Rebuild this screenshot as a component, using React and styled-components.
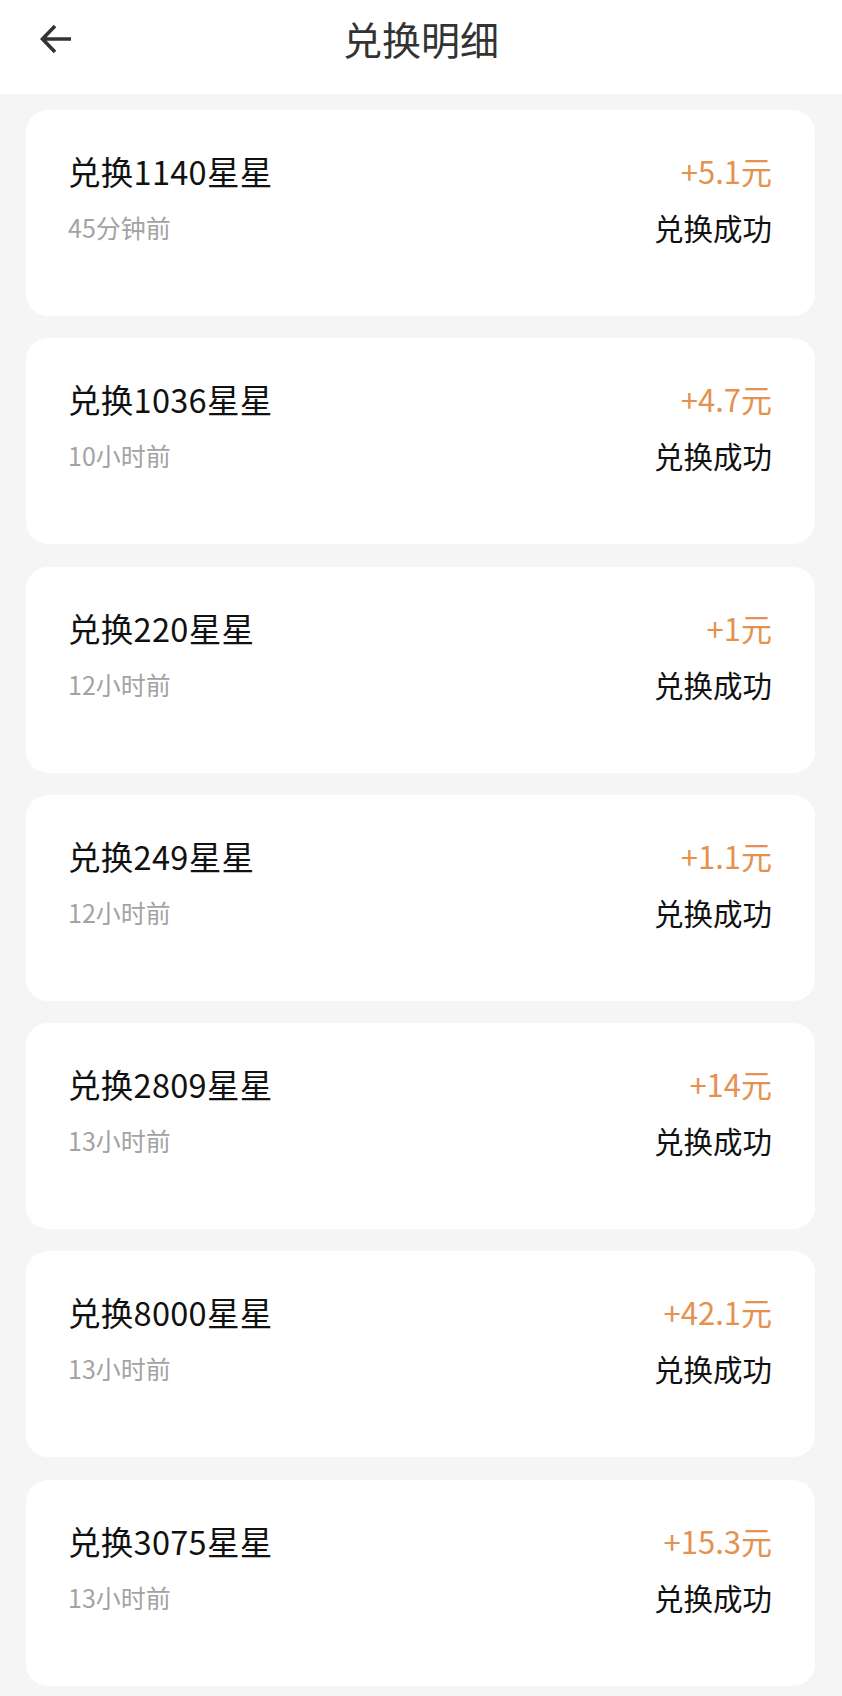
import React from "react";
import styled, { createGlobalStyle } from "styled-components";

const Global = createGlobalStyle`
  html, body { margin: 0; padding: 0; background: #f5f5f5; }
  body { font-family: "Noto Sans CJK SC", "Noto Sans", sans-serif; }
  * { box-sizing: border-box; }
`;

const Page = styled.div`
  width: 842px;
  min-height: 1696px;
  background: #f5f5f5;
`;

const Header = styled.header`
  position: relative;
  height: 94px;
  background: #ffffff;
  display: flex;
  align-items: center;
  justify-content: center;
`;

const Back = styled.button`
  position: absolute;
  left: 34px;
  top: 17px;
  width: 44px;
  height: 44px;
  padding: 0;
  border: 0;
  background: transparent;
  display: flex;
  align-items: center;
  justify-content: center;
`;

const Title = styled.h1`
  margin: 0 0 18px;
  font-size: 39px;
  font-weight: 400;
  color: #333333;
  line-height: 40px;
`;

const List = styled.div`
  display: flex;
  flex-direction: column;
  gap: 22.3px;
  padding: 16px 27px 12px 26px;
`;

const Card = styled.div`
  height: 206px;
  background: #ffffff;
  border-radius: 22px;
  padding: 43px 43px 0 42px;
  display: grid;
  grid-template-columns: 1fr auto;
  grid-template-rows: 36px 32px;
  row-gap: 22px;
  align-items: center;
`;

const Name = styled.div`
  font-size: 32.5px;
  line-height: 36px;
  color: #111111;
  letter-spacing: 0.3px;
`;

const Amount = styled.div`
  font-size: 31px;
  line-height: 36px;
  color: #e5914f;
  text-align: right;
`;

const Time = styled.div`
  font-size: 25px;
  line-height: 32px;
  color: #a3a3a3;
`;

const Status = styled.div`
  font-size: 29.5px;
  line-height: 32px;
  color: #111111;
  text-align: right;
`;

const records = [
  { stars: 1140, time: "45分钟前", amount: "+5.1元" },
  { stars: 1036, time: "10小时前", amount: "+4.7元" },
  { stars: 220, time: "12小时前", amount: "+1元" },
  { stars: 249, time: "12小时前", amount: "+1.1元" },
  { stars: 2809, time: "13小时前", amount: "+14元" },
  { stars: 8000, time: "13小时前", amount: "+42.1元" },
  { stars: 3075, time: "13小时前", amount: "+15.3元" },
];

export default function App() {
  return (
    <Page>
      <Global />
      <Header>
        <Back aria-label="返回">
          <svg width="36" height="36" viewBox="0 0 36 36" fill="none">
            <path
              d="M33 18H5M17 5L4.5 18L17 31"
              stroke="#333333"
              strokeWidth="3.6"
              strokeLinecap="butt"
              strokeLinejoin="miter"
            />
          </svg>
        </Back>
        <Title>兑换明细</Title>
      </Header>
      <List>
        {records.map((r, i) => (
          <Card key={i}>
            <Name>兑换{r.stars}星星</Name>
            <Amount>{r.amount}</Amount>
            <Time>{r.time}</Time>
            <Status>兑换成功</Status>
          </Card>
        ))}
      </List>
    </Page>
  );
}
